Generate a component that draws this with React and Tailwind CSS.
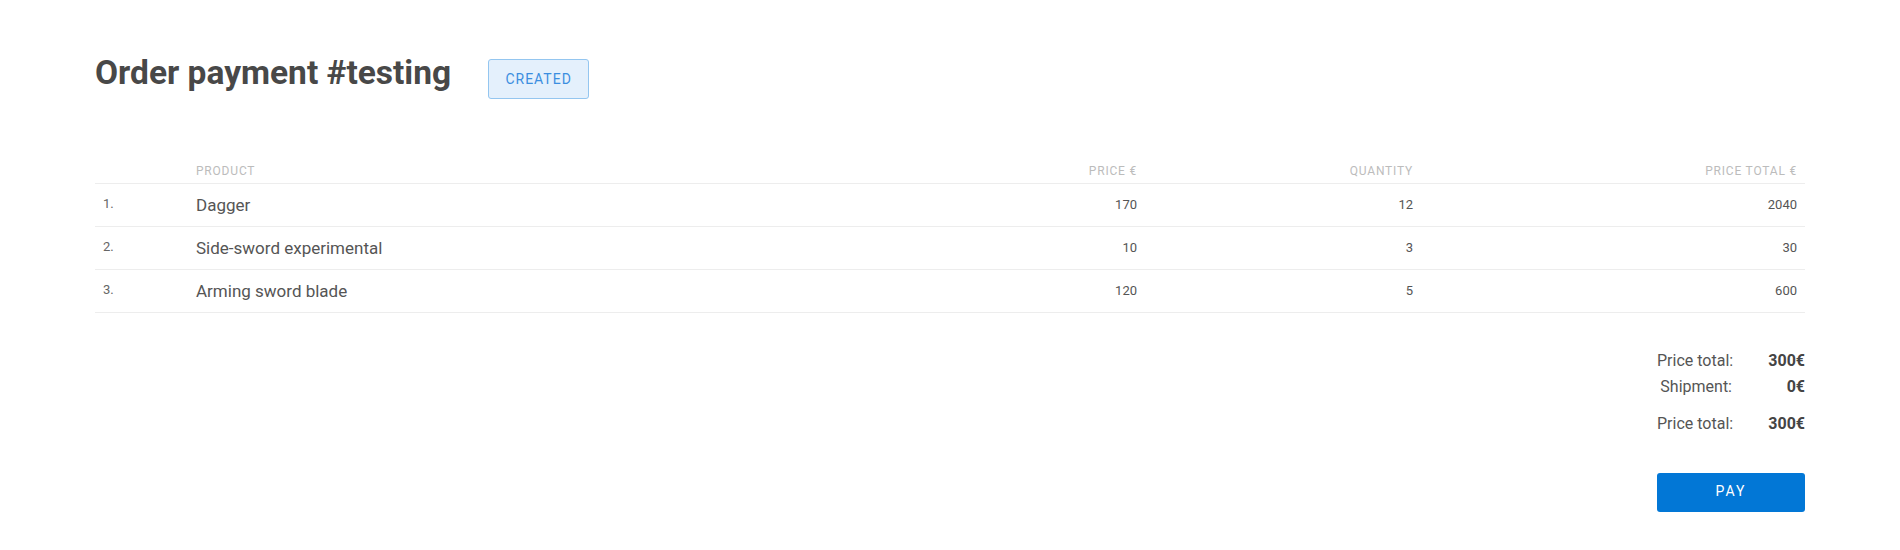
const items = [
  { name: 'Dagger', price: 170, qty: 12, total: 2040 },
  { name: 'Side-sword experimental', price: 10, qty: 3, total: 30 },
  { name: 'Arming sword blade', price: 120, qty: 5, total: 600 },
]

const cols = 'grid grid-cols-[93px_600px_357px_276px_1fr]'

export default function App() {
  return (
    <div className="min-h-[550px] bg-white px-[95px] pt-[49px] font-['Roboto','Liberation_Sans',sans-serif]">
      {/* Header */}
      <div className="flex items-start">
        <h1 className="text-[33.5px] leading-[48px] font-bold text-[#484848]">Order payment #testing</h1>
        <span className="ml-[37px] mt-[10px] flex h-[40px] w-[101px] items-center justify-center rounded-[3px] border border-[#94c6f0] bg-[#e4f0fc] text-[14px] tracking-[1px] text-[#3b8ee0]">
          CREATED
        </span>
      </div>

      {/* Items table */}
      <div className="mt-[64px]">
        <div className={`${cols} border-b border-[#ededed] pb-[4px] text-[12px] leading-[16px] tracking-[0.8px] text-[#bcbcbc]`}>
          <div className="px-2"></div>
          <div className="px-2">PRODUCT</div>
          <div className="px-2 text-right">PRICE €</div>
          <div className="px-2 text-right">QUANTITY</div>
          <div className="px-2 text-right">PRICE TOTAL €</div>
        </div>
        {items.map((item, i) => (
          <div key={item.name} className={`${cols} h-[43px] items-center border-b border-[#ededed] text-[#555]`}>
            <div className="px-2 pb-[3px] text-[13px] leading-[16px] text-[#666]">{i + 1}.</div>
            <div className="px-2 text-[17px] leading-[24px]">{item.name}</div>
            <div className="px-2 text-right text-[13px] leading-[20px]">{item.price}</div>
            <div className="px-2 text-right text-[13px] leading-[20px]">{item.qty}</div>
            <div className="px-2 text-right text-[13px] leading-[20px]">{item.total}</div>
          </div>
        ))}
      </div>

      {/* Summary */}
      <div className="ml-auto mt-[35px] w-[148px] whitespace-nowrap text-[16px] leading-[25.6px]">
        <div className="grid grid-cols-[75px_1fr]">
          <div className="text-right text-[#555]">Price total:</div>
          <div className="text-right font-bold text-[#444]">300€</div>
          <div className="text-right text-[#555]">Shipment:</div>
          <div className="text-right font-bold text-[#444]">0€</div>
        </div>
        <div className="mt-[12px] grid grid-cols-[75px_1fr]">
          <div className="text-right text-[#555]">Price total:</div>
          <div className="text-right font-bold text-[#444]">300€</div>
        </div>
        <button className="mt-[36px] h-[39px] w-[148px] rounded-[3px] bg-[#0277d6] text-[14px] tracking-[2px] text-white">
          PAY
        </button>
      </div>
    </div>
  )
}
